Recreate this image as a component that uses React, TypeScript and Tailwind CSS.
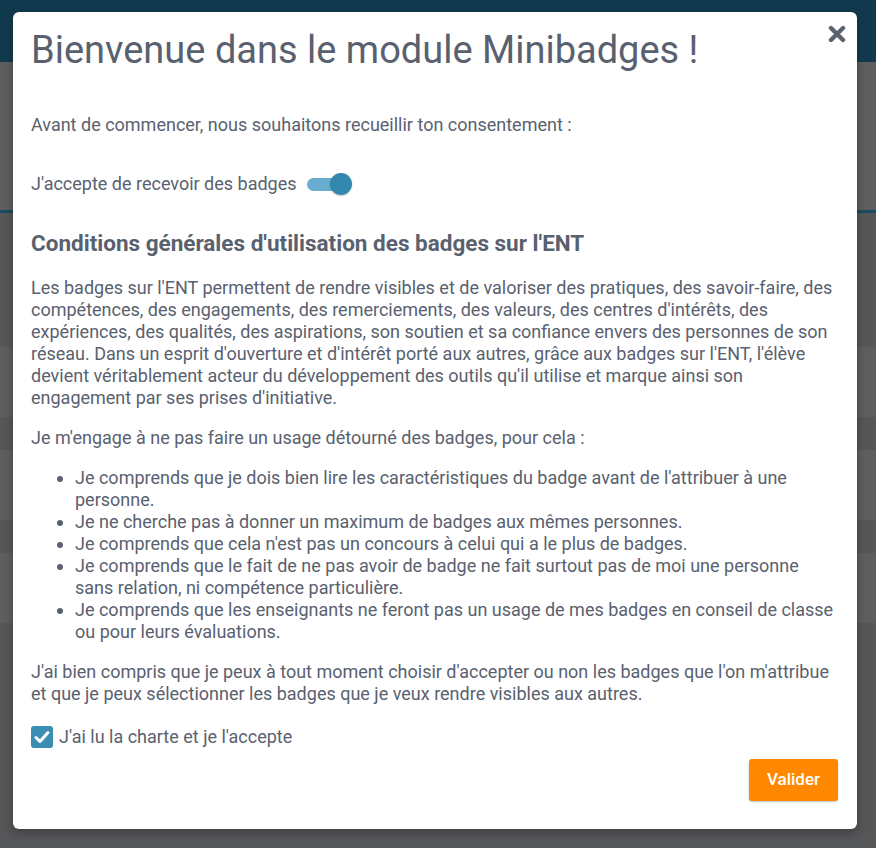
import React from "react";

export default function App() {
  const bands = [
    { h: "h-[62px]", c: "bg-[#123a4f]" },
    { h: "h-[148px]", c: "bg-[#5e5e5e]" },
    { h: "h-[3px]", c: "bg-[#1c4a60]" },
    { h: "h-[134px]", c: "bg-[#555658]" },
    { h: "h-[70px]", c: "bg-[#5e5e5e]" },
    { h: "h-[33px]", c: "bg-[#555658]" },
    { h: "h-[70px]", c: "bg-[#5e5e5e]" },
    { h: "h-[33px]", c: "bg-[#555658]" },
    { h: "h-[70px]", c: "bg-[#5e5e5e]" },
    { h: "h-[225px]", c: "bg-[#555658]" },
  ];
  return (
    <div className="relative w-[876px] h-[848px] overflow-hidden bg-[#555658]" style={{ fontFamily: "Roboto, 'Noto Sans', sans-serif" }}>
      <div className="flex flex-col">
        {bands.map((b, i) => (
          <div key={i} className={`${b.h} ${b.c}`} />
        ))}
      </div>

      <div className="absolute left-[13px] top-[12px] w-[844px] h-[817px] bg-white rounded-[6px] shadow-[0_3px_8px_rgba(0,0,0,0.3)] px-[18px] pt-[16px] text-[#59616f]">
        <button className="absolute right-[9px] top-[11px] w-[22px] h-[22px] flex items-center justify-center">
          <svg width="18" height="18" viewBox="0 0 18 18">
            <path d="M3 3 L15 15 M15 3 L3 15" stroke="#5b6371" strokeWidth="4.4" strokeLinecap="round" />
          </svg>
        </button>
        <h1 className="text-[38px] leading-[44px] font-normal text-[#59616f]">Bienvenue dans le module Minibadges !</h1>

        <p className="mt-[42px] text-[18px] leading-[22px]">Avant de commencer, nous souhaitons recueillir ton consentement :</p>

        <div className="mt-[37px] flex items-center h-[22px]">
          <span className="text-[18px] leading-[22px]">J'accepte de recevoir des badges</span>
          <div className="relative ml-[10px] w-[46px] h-[22px] flex items-center">
            <div className="w-[40px] h-[13px] rounded-full bg-[#68add0]" />
            <div className="absolute right-[1px] top-0 w-[22px] h-[22px] rounded-full bg-[#3389ad] shadow-[0_1px_2px_rgba(0,0,0,0.2)]" />
          </div>
        </div>

        <h2 className="mt-[35px] text-[22.5px] leading-[26px] font-bold text-[#59616f]">Conditions générales d'utilisation des badges sur l'ENT</h2>

        <p className="mt-[21px] text-[18px] leading-[22px]">
          Les badges sur l'ENT permettent de rendre visibles et de valoriser des pratiques, des savoir-faire, des compétences, des engagements, des remerciements, des valeurs, des centres d'intérêts, des expériences, des qualités, des aspirations, son soutien et sa confiance envers des personnes de son réseau. Dans un esprit d'ouverture et d'intérêt porté aux autres, grâce aux badges sur l'ENT, l'élève devient véritablement acteur du développement des outils qu'il utilise et marque ainsi son engagement par ses prises d'initiative.
        </p>

        <p className="mt-[18px] text-[18px] leading-[22px]">Je m'engage à ne pas faire un usage détourné des badges, pour cela :</p>

        <ul className="mt-[18px] pl-[44px] list-disc text-[18px] leading-[22px]">
          <li>Je comprends que je dois bien lire les caractéristiques du badge avant de l'attribuer à une personne.</li>
          <li>Je ne cherche pas à donner un maximum de badges aux mêmes personnes.</li>
          <li>Je comprends que cela n'est pas un concours à celui qui a le plus de badges.</li>
          <li>Je comprends que le fait de ne pas avoir de badge ne fait surtout pas de moi une personne sans relation, ni compétence particulière.</li>
          <li>Je comprends que les enseignants ne feront pas un usage de mes badges en conseil de classe ou pour leurs évaluations.</li>
        </ul>

        <p className="mt-[18px] text-[18px] leading-[22px]">
          J'ai bien compris que je peux à tout moment choisir d'accepter ou non les badges que l'on m'attribue et que je peux sélectionner les badges que je veux rendre visibles aux autres.
        </p>

        <div className="mt-[21px] flex items-center gap-[6px]">
          <div className="w-[22px] h-[22px] rounded-[3px] bg-[#3a8db3] flex items-center justify-center">
            <svg width="16" height="14" viewBox="0 0 16 14">
              <path d="M2 7.5 L6 11.5 L14 2.5" stroke="white" strokeWidth="3" fill="none" strokeLinecap="round" strokeLinejoin="round" />
            </svg>
          </div>
          <span className="text-[18px] leading-[22px]">J'ai lu la charte et je l'accepte</span>
        </div>

        <div className="flex justify-end mt-[11px] pr-[1px]">
          <button className="w-[89px] h-[42px] rounded-[3px] bg-[#ff8800] text-white text-[17px] font-medium shadow-[0_1px_2px_rgba(0,0,0,0.25)]">Valider</button>
        </div>
      </div>
    </div>
  );
}
